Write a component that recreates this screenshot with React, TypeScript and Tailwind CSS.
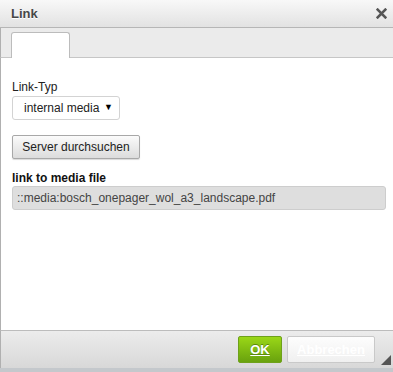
export default function App() {
  return (
    <div className="w-[393px] h-[372px] flex flex-col bg-white [font-family:'Liberation_Sans',Arial,sans-serif] text-[12px] text-black overflow-hidden">
      {/* Titel */}
      <div className="h-[28px] shrink-0 flex items-center justify-between pl-[11px] pr-[6px] bg-gradient-to-b from-[#f8f8f8] to-[#e2e2e2] border-b border-[#b6b6b6]">
        <span className="text-[13px] font-bold text-[#474747] [text-shadow:0_1px_0_#fff]">Link</span>
        <svg className="w-[11px] h-[11px]" viewBox="0 0 10 10">
          <path d="M1.5 1.5l7 7M8.5 1.5l-7 7" stroke="#555" strokeWidth={2.4} strokeLinecap="square" />
        </svg>
      </div>

      {/* Tabs */}
      <div className="h-[30px] shrink-0 flex items-end pl-[10px] bg-[#ebebeb] border-b border-[#c6c6c6] border-l border-l-[#b0b0b0]">
        <div className="w-[59px] h-[26px] -mb-px bg-white border border-b-0 border-[#bcbcbc] rounded-t-[3px]" />
      </div>

      {/* Inhalt */}
      <div className="flex-1 flex flex-col pl-[11px] pr-[7px] pt-[22px] border-l border-[#b0b0b0] whitespace-nowrap">
        <label className="text-[#222] leading-[14px]">Link-Typ</label>
        <div className="mt-[2px] w-[108px] h-[24px] flex items-center justify-between pl-[11px] pr-[6px] border border-[#d3d3d3] rounded-[3px] bg-white">
          <span className="text-[#222]">internal media</span>
          <span className="text-[9px] text-black">▼</span>
        </div>

        <button className="mt-[15px] w-[128px] h-[24px] flex items-center justify-center text-[#222] border border-[#a8a8a8] rounded-[2px] bg-gradient-to-b from-[#fbfbfb] to-[#dcdcdc] shadow-[0_1px_1px_rgba(0,0,0,0.15)]">
          Server durchsuchen
        </button>

        <label className="mt-[12px] font-bold text-[#111] leading-[14px]">link to media file</label>
        <div className="mt-px w-[374px] h-[24px] flex items-center pl-[4px] bg-[#dedede] border border-[#cdcdcd] rounded-[3px]">
          <span className="text-[#444]">::media:bosch_onepager_wol_a3_landscape.pdf</span>
        </div>
      </div>

      {/* Fußzeile */}
      <div className="relative h-[38px] shrink-0 flex items-center justify-end gap-[5px] pr-[18px] bg-gradient-to-b from-[#ececec] to-[#d8d8d8] border-t border-[#bcbcbc] border-l border-l-[#b0b0b0]">
        <button className="w-[44px] h-[27px] flex items-center justify-center text-[13px] font-bold text-white underline [text-shadow:0_-1px_0_#5b8a0a] border border-[#6ea11a] rounded-[2px] bg-gradient-to-b from-[#9ad717] to-[#69a20e]">
          OK
        </button>
        <button className="w-[88px] h-[27px] flex items-center justify-center text-[13px] font-bold text-white underline border border-[#c9c9c9] rounded-[2px] bg-gradient-to-b from-[#fdfdfd] to-[#f0f0f0]">
          Abbrechen
        </button>
        <svg className="absolute right-[2px] bottom-[3px] w-[10px] h-[10px]" viewBox="0 0 10 10">
          <path d="M10 0L10 10L0 10Z" fill="#555" />
        </svg>
      </div>
      <div className="h-[4px] shrink-0 bg-[#c4c8cc]" />
    </div>
  );
}
